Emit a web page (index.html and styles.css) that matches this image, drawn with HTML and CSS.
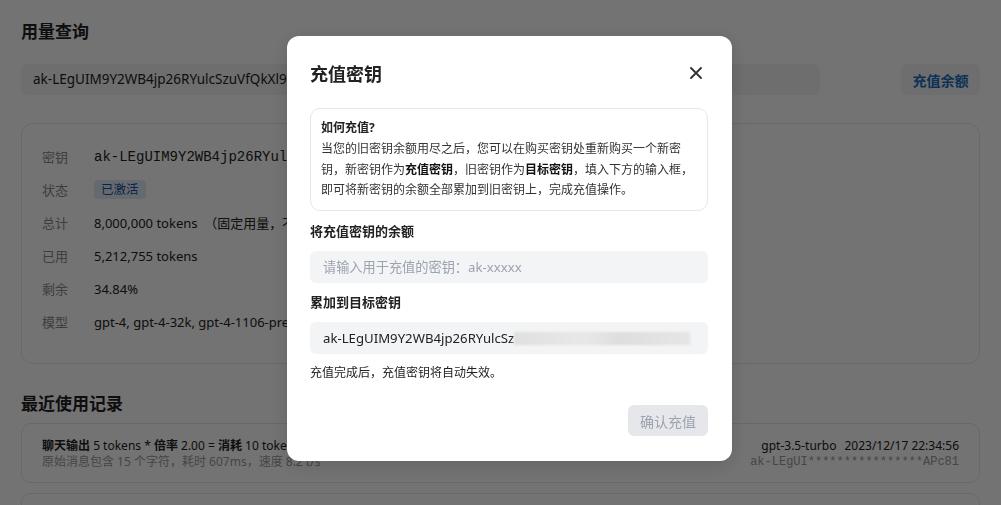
FILE: index.html
```html
<!DOCTYPE html>
<html lang="zh-CN">
<head>
<meta charset="utf-8">
<title>用量查询</title>
<link rel="stylesheet" href="styles.css">
</head>
<body>
<div class="page">
  <h2 class="title">用量查询</h2>
  <div class="query-row">
    <div class="key-input">ak-LEgUIM9Y2WB4jp26RYulcSzuVfQkXl9dT3BlbkFJ8xWmAPc81</div>
    <button class="recharge-btn">充值余额</button>
  </div>
  <div class="info-card">
    <div class="row"><span class="label">密钥</span><span class="value mono">ak-LEgUIM9Y2WB4jp26RYulcSzuVfQkXl9dT3BlbkFJ8xWmAPc81</span></div>
    <div class="row"><span class="label">状态</span><span class="value"><span class="badge">已激活</span></span></div>
    <div class="row"><span class="label">总计</span><span class="value">8,000,000 tokens  （固定用量，不随时间重置）</span></div>
    <div class="row"><span class="label">已用</span><span class="value">5,212,755 tokens</span></div>
    <div class="row"><span class="label">剩余</span><span class="value">34.84%</span></div>
    <div class="row"><span class="label">模型</span><span class="value">gpt-4, gpt-4-32k, gpt-4-1106-preview, gpt-3.5-turbo, gpt-3.5-turbo-16k</span></div>
  </div>
  <h2 class="title section-title">最近使用记录</h2>
  <div class="records">
    <div class="record">
      <div class="rec-left">
        <div class="rec-main"><b>聊天输出</b> 5 tokens * <b>倍率</b> 2.00 = <b>消耗</b> 10 tokens</div>
        <div class="rec-sub">原始消息包含 15 个字符，耗时 607ms，速度 8.2 t/s</div>
      </div>
      <div class="rec-right">
        <div class="rec-meta"><span>gpt-3.5-turbo</span><span>2023/12/17 22:34:56</span></div>
        <div class="rec-key mono">ak-LEgUI****************APc81</div>
      </div>
    </div>
    <div class="record">
      <div class="rec-left">
        <div class="rec-main"><b>聊天输入</b> 12 tokens * <b>倍率</b> 2.00 = <b>消耗</b> 24 tokens</div>
        <div class="rec-sub">原始消息包含 36 个字符</div>
      </div>
      <div class="rec-right">
        <div class="rec-meta"><span>gpt-3.5-turbo</span><span>2023/12/17 22:34:55</span></div>
        <div class="rec-key mono">ak-LEgUI****************APc81</div>
      </div>
    </div>
  </div>
</div>

<div class="overlay">
  <div class="modal">
    <div class="modal-head">
      <h3 class="modal-title">充值密钥</h3>
      <button class="close-btn" aria-label="关闭">
        <svg width="14" height="14" viewBox="0 0 14 14"><path d="M2 2L12 12M12 2L2 12" stroke="#333" stroke-width="1.9" stroke-linecap="round"/></svg>
      </button>
    </div>
    <div class="howto">
      <div class="howto-title">如何充值?</div>
      <p class="howto-text">当您的旧密钥余额用尽之后，您可以在购买密钥处重新购买一个新密<br>钥，新密钥作为<b>充值密钥</b>，旧密钥作为<b>目标密钥</b>，填入下方的输入框，<br>即可将新密钥的余额全部累加到旧密钥上，完成充值操作。</p>
    </div>
    <div class="field-label">将充值密钥的余额</div>
    <div class="field placeholder">请输入用于充值的密钥：ak-xxxxx</div>
    <div class="field-label">累加到目标密钥</div>
    <div class="field">ak-LEgUIM9Y2WB4jp26RYulcSz<span class="blurred"></span></div>
    <div class="note">充值完成后，充值密钥将自动失效。</div>
    <div class="modal-foot">
      <button class="confirm-btn">确认充值</button>
    </div>
  </div>
</div>
</body>
</html>
```

FILE: styles.css
```css
html, body {
  margin: 0;
  padding: 0;
  overflow: hidden;
  background: #ffffff;
  font-family: "Noto Sans", "Noto Sans CJK SC", sans-serif;
  color: #222;
}

.page {
  padding: 20px 21px 0;
}

.title {
  margin: 0;
  font-size: 17px;
  line-height: 24px;
  font-weight: 700;
  color: #1f1f1f;
}

.query-row {
  display: flex;
  gap: 81px;
  margin-top: 20px;
}

.key-input {
  flex: 1;
  height: 31px;
  line-height: 31px;
  padding: 0 12px;
  background: #f3f4f6;
  border-radius: 6px;
  font-size: 13.5px;
  color: #222;
  white-space: nowrap;
  overflow: hidden;
}

.recharge-btn {
  width: 79px;
  height: 31px;
  border: none;
  border-radius: 6px;
  background: #f3f4f6;
  color: #1b6fc0;
  font-family: inherit;
  font-size: 14px;
  font-weight: 700;
  padding: 0;
}

.info-card {
  margin-top: 28px;
  border: 1px solid #e5e7eb;
  border-radius: 12px;
  padding: 16px 20px 25px;
}

.row {
  display: flex;
  align-items: center;
  height: 33px;
  font-size: 13px;
}

.label {
  width: 52px;
  flex: none;
  color: #8a8a8a;
}

.value {
  color: #222;
  white-space: pre;
}

.mono {
  font-family: "Liberation Mono", monospace;
}

.row .mono {
  font-size: 14px;
}

.badge {
  display: inline-block;
  padding: 0 7px;
  height: 19px;
  line-height: 19px;
  border-radius: 4px;
  background: #e1ebf8;
  color: #1e4f9a;
  font-size: 12.5px;
}

.section-title {
  margin-top: 28px;
  margin-bottom: 7px;
}

.records {
  display: flex;
  flex-direction: column;
  gap: 10px;
}

.record {
  display: flex;
  justify-content: space-between;
  align-items: center;
  height: 58px;
  padding: 0 20px;
  border: 1px solid #e5e7eb;
  border-radius: 10px;
}

.rec-main, .rec-meta {
  font-size: 12px;
  line-height: 17px;
  color: #222;
}

.rec-main b {
  font-weight: 700;
}

.rec-sub {
  font-size: 12px;
  line-height: 16px;
  color: #9a9a9a;
}

.rec-right {
  text-align: right;
}

.rec-meta {
  display: flex;
  gap: 8px;
  justify-content: flex-end;
}

.rec-key {
  font-size: 12px;
  line-height: 16px;
  color: #9a9a9a;
}

/* overlay + modal */
.overlay {
  position: fixed;
  inset: 0;
  background: rgba(0, 0, 0, 0.55);
  display: flex;
  align-items: center;
  justify-content: center;
}

.modal {
  width: 445px;
  height: 425px;
  box-sizing: border-box;
  margin-left: 18px;
  margin-bottom: 8px;
  background: #fff;
  border-radius: 12px;
  padding: 24px 24px 25px 23px;
  display: flex;
  flex-direction: column;
  box-shadow: 0 4px 20px rgba(0, 0, 0, 0.15);
}

.modal-head {
  display: flex;
  justify-content: space-between;
  align-items: center;
  height: 26px;
}

.modal-title {
  margin: 0;
  font-size: 18px;
  font-weight: 700;
  color: #222;
}

.close-btn {
  border: none;
  background: none;
  padding: 0;
  width: 14px;
  height: 14px;
  margin-right: 5px;
  display: flex;
}

.howto {
  margin-top: 22px;
  height: 103px;
  box-sizing: border-box;
  border: 1px solid #e5e7eb;
  border-radius: 10px;
  padding: 10px 10px;
}

.howto-title {
  font-size: 12px;
  font-weight: 700;
  line-height: 18px;
  color: #222;
}

.howto-text {
  margin: 2px 0 0;
  font-size: 12px;
  line-height: 20.5px;
  color: #333;
  white-space: nowrap;
}

.howto-text b {
  font-weight: 700;
  color: #111;
}

.field-label {
  margin-top: 11px;
  font-size: 13px;
  line-height: 18px;
  font-weight: 700;
  color: #222;
}

.field {
  margin-top: 11px;
  height: 32px;
  line-height: 32px;
  padding: 0 13px;
  background: #f3f4f5;
  border-radius: 6px;
  font-size: 13.2px;
  color: #222;
  display: flex;
  align-items: center;
}

.field.placeholder {
  color: #9ca3af;
}

.field + .field-label {
  margin-top: 10px;
}

.blurred {
  display: inline-block;
  width: 176px;
  height: 13px;
  background: linear-gradient(90deg, #e0e0e0, #e8e8e8 40%, #dedede 60%, #e6e6e6);
  filter: blur(1px);
}

.note {
  margin-top: 10px;
  font-size: 12px;
  line-height: 17px;
  color: #222;
}

.modal-foot {
  margin-top: auto;
  display: flex;
  justify-content: flex-end;
}

.confirm-btn {
  width: 80px;
  height: 31px;
  border: none;
  border-radius: 6px;
  background: #e5e7eb;
  color: #9ca3af;
  font-family: inherit;
  font-size: 14px;
  padding: 0;
}
```
